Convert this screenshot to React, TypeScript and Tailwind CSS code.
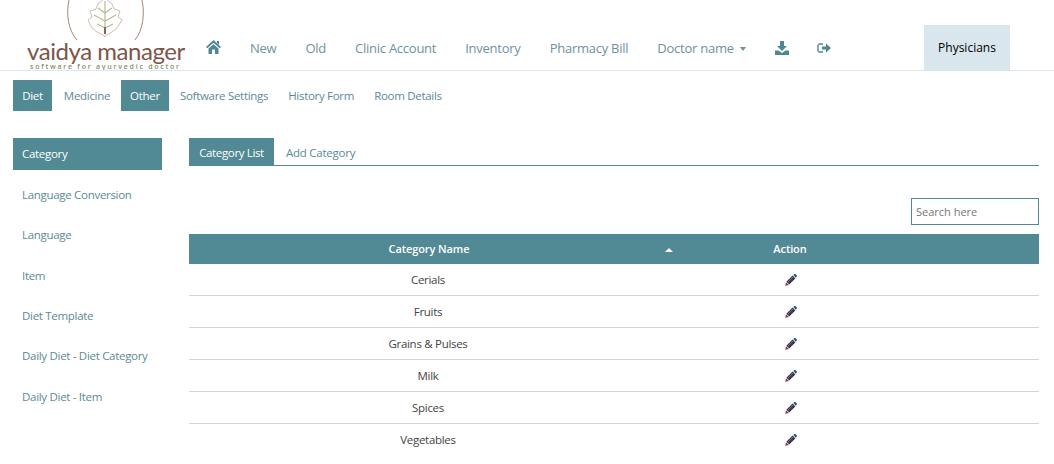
const topLinks = ["New", "Old", "Clinic Account", "Inventory", "Pharmacy Bill"]

const sideItems = ["Language Conversion", "Language", "Item", "Diet Template", "Daily Diet - Diet Category", "Daily Diet - Item"]
const rows = ["Cerials", "Fruits", "Grains & Pulses", "Milk", "Spices", "Vegetables"]

function Logo() {
  return (
    <div className="relative w-[168px] h-[70px] shrink-0 overflow-hidden">
      <svg className="absolute left-[40px] top-0" width="100" height="46" viewBox="58 0 100 46" fill="none">
        <path d="M69 0C66 14 68 30 77 40M142 0C145 14 143 30 135 40" stroke="#a98577" strokeWidth="1" />
        <path d="M105 -2L112 4L114 9L120 11L118 17L122 20L117 28L112 32L106 35L105 37L103 35L97 32L92 28L88 20L92 17L90 11L96 9L98 4Z" stroke="#c4a99d" strokeWidth="0.8" fill="#fff" />
        <path d="M105 1V33M105 13L98 8M105 13L112 8M105 21L94 15M105 21L116 15M105 28L97 24M105 28L113 24" stroke="#b3bd92" strokeWidth="1.2" />
        <path d="M105 27V34" stroke="#96604c" strokeWidth="2" />
      </svg>
      <div className="absolute left-[9px] top-[39px] text-[24px] leading-[23px] text-[#7e5548] whitespace-nowrap font-['Lato',sans-serif] tracking-[-0.45px]">vaidya manager</div>
      <div className="absolute left-[12px] top-[63px] text-[7px] leading-[7px] text-[#8c8c6a] whitespace-nowrap tracking-[1.75px] font-semibold">software for ayurvedic doctor</div>
    </div>
  )
}

function HomeIcon() {
  return (
    <svg width="15" height="14" viewBox="0 0 15 14" className="-mt-[5px]" fill="#4f8794">
      <path d="M7.5 0L15 7L13.7 8.2L7.5 2.8L1.3 8.2L0 7Z" />
      <path d="M11 1H13V4.8L11 3Z" />
      <path d="M2.5 8.6L7.5 4.2L12.5 8.6V14H9V9.5H6V14H2.5Z" />
    </svg>
  )
}

function DownloadIcon() {
  return (
    <svg width="14" height="14" viewBox="0 0 14 14" className="-mt-[2px]" fill="#4f8794">
      <path d="M5 0H9V5H12L7 10L2 5H5Z" />
      <path d="M0 9.5H3.5L7 12L10.5 9.5H14V14H0Z" />
    </svg>
  )
}

function LogoutIcon() {
  return (
    <svg width="14" height="14" viewBox="0 0 14 14" className="-mt-[2px] -ml-[1px]" fill="none">
      <path d="M6 3H3A2 2 0 0 0 1 5V9A2 2 0 0 0 3 11H6" stroke="#7fa3ad" strokeWidth="1.8" />
      <path d="M5 5.5H9V2.5L14 7L9 11.5V8.5H5Z" fill="#4f8794" />
    </svg>
  )
}

function Pencil() {
  return (
    <svg width="12" height="12" viewBox="0 0 12 12" className="mx-auto">
      <path d="M0.3 11.7L1 8.2L3.8 11Z" fill="#8f2f2a" />
      <path d="M1.4 7.8L7.6 1.6L10.4 4.4L4.2 10.6Z" fill="#3a3852" />
      <path d="M3 8L8 3" stroke="#6d7fa8" strokeWidth="0.8" />
      <path d="M8.2 1L9.2 0.2Q10 -0.2 10.6 0.3L11.7 1.4Q12.2 2 11.7 2.8L10.9 3.8Z" fill="#2b4a9c" />
    </svg>
  )
}

export default function App() {
  return (
    <div className="h-[464px] w-[1054px] overflow-hidden bg-white text-[12px] text-[#5b8a96] font-['Open_Sans','Noto_Sans',sans-serif]">
      <div className="flex h-[71px] border-b border-[#d8e6ee] pl-[18px]">
        <Logo />
        <div className="flex items-center gap-[29px] pt-[28px] ml-[20px] text-[13px] tracking-[-0.25px] text-[#6d939e]">
          <HomeIcon />
          {topLinks.map((l) => (
            <div key={l}>{l}</div>
          ))}
          <div className="flex items-center">
            Doctor name
            <span className="ml-[6px] border-x-[3.5px] border-x-transparent border-t-[4px] border-t-[#6d939e]" />
          </div>
          <DownloadIcon />
          <LogoutIcon />
        </div>
        <div className="ml-auto mr-[44px] mt-[25px] h-[45px] w-[86px] bg-[#d9e6ee] flex items-center justify-center text-black text-[12px] pt-px">Physicians</div>
      </div>

      <div className="flex mt-[9px] ml-[13px] h-[31px] text-[11.5px] tracking-[-0.3px] items-center">
        <div className="h-full w-[39px] bg-[#518994] text-white flex items-center justify-center">Diet</div>
        <div className="w-[69px] text-center pl-[1px]">Medicine</div>
        <div className="h-full w-[48px] bg-[#518994] text-white flex items-center justify-center">Other</div>
        <div className="flex gap-[20px] ml-[11px]">
          <div>Software Settings</div>
          <div>History Form</div>
          <div>Room Details</div>
        </div>
      </div>

      <div className="flex mt-[27px] ml-[13px]">
        <div className="w-[149px] shrink-0 text-[11.5px] tracking-[-0.3px]">
          <div className="h-[32px] bg-[#518994] text-white flex items-center pl-[9px]">Category</div>
          {sideItems.map((s) => (
            <div key={s} className="h-[40.3px] flex items-center pl-[9px] pt-[9px]">{s}</div>
          ))}
        </div>

        <div className="ml-[27px] w-[850px]">
          <div className="flex h-[28px] border-b border-[#518994] text-[11.5px] tracking-[-0.25px]">
            <div className="w-[85px] bg-[#518994] text-white flex items-center justify-center pt-[2px] tracking-[-0.35px]">Category List</div>
            <div className="ml-[12px] flex items-center pt-[2px]">Add Category</div>
          </div>
          <div className="flex justify-end mt-[32px]">
            <div className="w-[128px] h-[27px] border border-[#518994] flex items-center pl-[4px] pt-px text-[#777] text-[11px]">Search here</div>
          </div>
          <div className="grid grid-cols-[480px_242px_128px] mt-[9px] h-[30px] bg-[#518994] text-white font-semibold text-[11px] tracking-[-0.1px]">
            <div className="relative flex items-center justify-center">
              Category Name
              <span className="absolute left-[476px] top-[14px] border-x-[4px] border-x-transparent border-b-[4px] border-b-white" />
            </div>
            <div className="flex items-center justify-center">Action</div>
          </div>
          {rows.map((r, i) => (
            <div key={r} className={`grid grid-cols-[480px_242px_128px] h-[32px] text-[#444] text-[11.5px] tracking-[-0.3px] items-center ${i < rows.length - 1 ? "border-b border-[#d4d4d4]" : ""}`}>
              <div className="text-center pr-[2px]">{r}</div>
              <div className="pl-[2px]"><Pencil /></div>
            </div>
          ))}
        </div>
      </div>
    </div>
  )
}
